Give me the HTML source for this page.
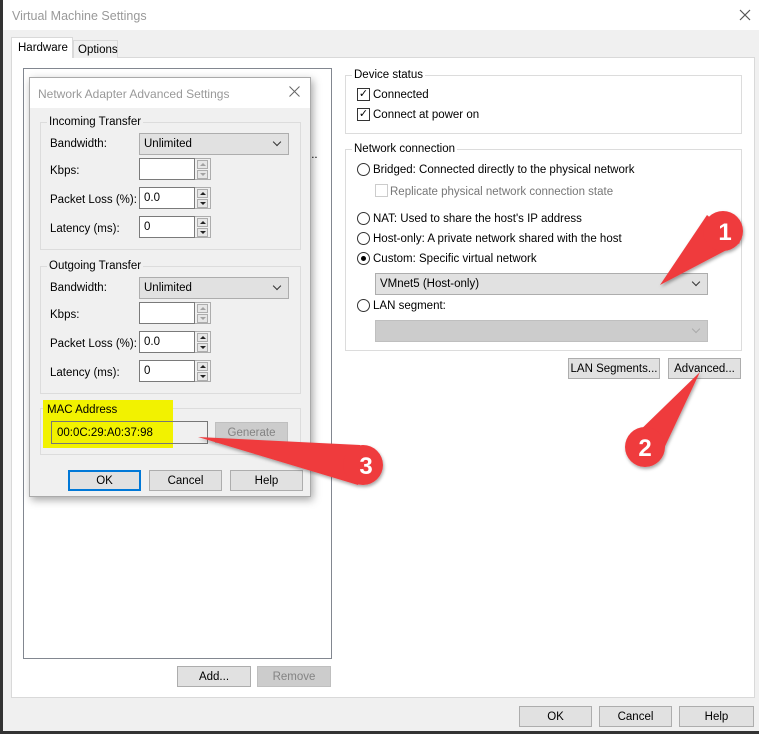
<!DOCTYPE html>
<html><head><meta charset="utf-8"><style>
*{margin:0;padding:0;box-sizing:border-box}
body{width:759px;height:734px;position:relative;overflow:hidden;background:#f0f0f0;font-family:"Liberation Sans",sans-serif;font-size:11.5px;color:#000}
.a{position:absolute}
.btn{position:absolute;background:#e1e1e1;border:1px solid #adadad;text-align:center;line-height:20px;font-size:11.5px}
.dis{color:#838383;background:#cccccc;border-color:#bfbfbf}
.grp{position:absolute;border:1px solid #dcdcdc}
.gl{position:absolute;top:-7px;left:6px;padding:0 2px;background:inherit;line-height:13px}
.inp{position:absolute;background:#fff;border:1px solid #7a7a7a;height:22px;padding:4px 4px}
.spin{position:absolute;width:16px;height:22px;border:1px solid #adadad;border-left:none;background:#f0f0f0}
.spin i{position:absolute;left:2px;width:11px;height:9px;border:1px solid #adadad;background:#e6e6e6}
.spin i:after{content:"";position:absolute;left:2px;border-left:3px solid transparent;border-right:3px solid transparent}
.spin i.u{top:1px}.spin i.u:after{top:2px;border-bottom:3px solid #222}
.spin i.d{top:11px}.spin i.d:after{top:2px;border-top:3px solid #222}
.spin.g i:after{opacity:.35}
.sel{position:absolute;background:#e1e1e1;border:1px solid #adadad;height:22px;padding:4px 4px}
.sel:after{content:"";position:absolute;right:8px;top:5px;width:5px;height:5px;border-right:1px solid #333;border-bottom:1px solid #333;transform:rotate(45deg)}
.sel.x:after{border-color:#aaa}
.rad{position:absolute;width:13px;height:13px;border:1px solid #333;border-radius:50%;background:#fff}
.chk{position:absolute;width:13px;height:13px;border:1px solid #333;background:#fff;font-size:11px;line-height:11px;text-align:center}
</style></head><body>
<div class="a" style="left:0;top:0;width:759px;height:30px;background:#fff"></div>
<div class="a" style="left:0;top:0;width:3px;height:734px;background:#333"></div>
<div class="a" style="left:0;top:731px;width:759px;height:3px;background:#333"></div>
<div class="a" style="left:12px;top:9px;color:#999;font-size:12.5px">Virtual Machine Settings</div>
<svg class="a" style="left:739px;top:9px" width="12" height="12"><path d="M1 1L11 11M11 1L1 11" stroke="#555" stroke-width="1.2"/></svg>
<!-- tab panel -->
<div class="a" style="left:11px;top:57px;width:744px;height:641px;background:#fff;border:1px solid #d9d9d9"></div>
<div class="a" style="left:11px;top:37px;width:62px;height:21px;background:#fff;border:1px solid #d9d9d9;border-bottom:none;padding:4px 6px">Hardware</div>
<div class="a" style="left:73px;top:40px;width:45px;height:18px;background:#f0f0f0;border:1px solid #d9d9d9;border-bottom:none;padding:3px 4px">Options</div>
<div class="a" style="left:23px;top:68px;width:309px;height:591px;border:1px solid #828790;background:#fff"></div>
<div class="a" style="left:308px;top:149px">...</div>
<div class="btn" style="left:177px;top:666px;width:74px;height:21px">Add...</div>
<div class="btn dis" style="left:257px;top:666px;width:74px;height:21px">Remove</div>
<!-- right side -->
<div class="grp" style="left:345px;top:75px;width:397px;height:59px;background:#fff"><span class="gl">Device status</span></div>
<div class="chk" style="left:357px;top:88px">✓</div><div class="a" style="left:373px;top:89px">Connected</div>
<div class="chk" style="left:357px;top:108px">✓</div><div class="a" style="left:373px;top:109px">Connect at power on</div>
<div class="grp" style="left:345px;top:149px;width:397px;height:202px;background:#fff"><span class="gl">Network connection</span></div>
<div class="rad" style="left:357px;top:163px"></div><div class="a" style="left:373px;top:164px">Bridged: Connected directly to the physical network</div>
<div class="chk" style="left:375px;top:184px;border-color:#ccc"></div><div class="a" style="left:390px;top:186px;color:#777">Replicate physical network connection state</div>
<div class="rad" style="left:357px;top:212px"></div><div class="a" style="left:373px;top:213px">NAT: Used to share the host's IP address</div>
<div class="rad" style="left:357px;top:232px"></div><div class="a" style="left:373px;top:233px">Host-only: A private network shared with the host</div>
<div class="rad" style="left:357px;top:252px"><div class="a" style="left:3px;top:3px;width:5px;height:5px;border-radius:50%;background:#000"></div></div><div class="a" style="left:373px;top:253px">Custom: Specific virtual network</div>
<div class="sel" style="left:375px;top:273px;width:333px">VMnet5 (Host-only)</div>
<div class="rad" style="left:357px;top:299px"></div><div class="a" style="left:373px;top:300px">LAN segment:</div>
<div class="sel x" style="left:375px;top:320px;width:333px;background:#ccc;border-color:#bfbfbf"></div>
<div class="btn" style="left:568px;top:358px;width:92px;height:21px">LAN Segments...</div>
<div class="btn" style="left:668px;top:358px;width:73px;height:21px">Advanced...</div>
<div class="btn" style="left:519px;top:706px;width:73px;height:21px">OK</div>
<div class="btn" style="left:599px;top:706px;width:73px;height:21px">Cancel</div>
<div class="btn" style="left:679px;top:706px;width:75px;height:21px">Help</div>
<!-- dialog -->
<div class="a" style="left:29px;top:77px;width:282px;height:420px;background:#f0f0f0;border:1px solid #aaa;box-shadow:2px 3px 8px rgba(0,0,0,.35)"></div>
<div class="a" style="left:30px;top:78px;width:280px;height:30px;background:#fff"></div>
<div class="a" style="left:38px;top:87px;color:#999;font-size:12px">Network Adapter Advanced Settings</div>
<svg class="a" style="left:289px;top:86px" width="11" height="11"><path d="M0.5 0.5L10.5 10.5M10.5 0.5L0.5 10.5" stroke="#666" stroke-width="1"/></svg>
<div class="grp" style="left:40px;top:122px;width:261px;height:128px;background:#f0f0f0"><span class="gl">Incoming Transfer</span></div>
<div class="a" style="left:50px;top:138px">Bandwidth:</div><div class="sel" style="left:139px;top:133px;width:150px">Unlimited</div>
<div class="a" style="left:50px;top:165px">Kbps:</div><div class="inp" style="left:139px;top:158px;width:56px"></div><div class="spin g" style="left:195px;top:158px"><i class="u"></i><i class="d"></i></div>
<div class="a" style="left:50px;top:194px">Packet Loss (%):</div><div class="inp" style="left:139px;top:187px;width:56px">0.0</div><div class="spin" style="left:195px;top:187px"><i class="u"></i><i class="d"></i></div>
<div class="a" style="left:50px;top:223px">Latency (ms):</div><div class="inp" style="left:139px;top:216px;width:56px">0</div><div class="spin" style="left:195px;top:216px"><i class="u"></i><i class="d"></i></div>
<div class="grp" style="left:40px;top:266px;width:261px;height:128px;background:#f0f0f0"><span class="gl">Outgoing Transfer</span></div>
<div class="a" style="left:50px;top:282px">Bandwidth:</div><div class="sel" style="left:139px;top:277px;width:150px">Unlimited</div>
<div class="a" style="left:50px;top:309px">Kbps:</div><div class="inp" style="left:139px;top:302px;width:56px"></div><div class="spin g" style="left:195px;top:302px"><i class="u"></i><i class="d"></i></div>
<div class="a" style="left:50px;top:338px">Packet Loss (%):</div><div class="inp" style="left:139px;top:331px;width:56px">0.0</div><div class="spin" style="left:195px;top:331px"><i class="u"></i><i class="d"></i></div>
<div class="a" style="left:50px;top:367px">Latency (ms):</div><div class="inp" style="left:139px;top:360px;width:56px">0</div><div class="spin" style="left:195px;top:360px"><i class="u"></i><i class="d"></i></div>
<div class="grp" style="left:40px;top:408px;width:261px;height:47px"></div>
<div class="a" style="left:43px;top:400px;width:130px;height:48px;background:#f2f200"></div>
<div class="a" style="left:47px;top:404px">MAC Address</div>
<div class="a" style="left:51px;top:421px;width:157px;height:23px;border:1px solid #777"></div>
<div class="a" style="left:57px;top:427px">00:0C:29:A0:37:98</div>
<div class="btn dis" style="left:215px;top:422px;width:73px;height:21px">Generate</div>
<div class="btn" style="left:68px;top:470px;width:73px;height:21px;border:2px solid #0078d7;line-height:18px">OK</div>
<div class="btn" style="left:149px;top:470px;width:73px;height:21px">Cancel</div>
<div class="btn" style="left:230px;top:470px;width:73px;height:21px">Help</div>
<!-- arrows -->
<svg class="a" style="left:0;top:0" width="759" height="734">
<defs><filter id="s"><feDropShadow dx="1" dy="2" stdDeviation="1.5" flood-opacity=".35"/></filter></defs>
<g fill="#ef3a3e" filter="url(#s)">
<polygon points="660,285 707,215 740,243"/><circle cx="723" cy="231" r="20"/>
<polygon points="700,372 630,440 660,457"/><circle cx="645" cy="447" r="20"/>
<polygon points="198,437 360,445 358,485"/><circle cx="363" cy="465" r="20"/>
</g>
<g fill="#fff" font-family="Liberation Sans" font-weight="bold" font-size="24" text-anchor="middle">
<text x="725" y="240">1</text><text x="645" y="456">2</text><text x="366" y="474">3</text>
</g>
</svg>
</body></html>
